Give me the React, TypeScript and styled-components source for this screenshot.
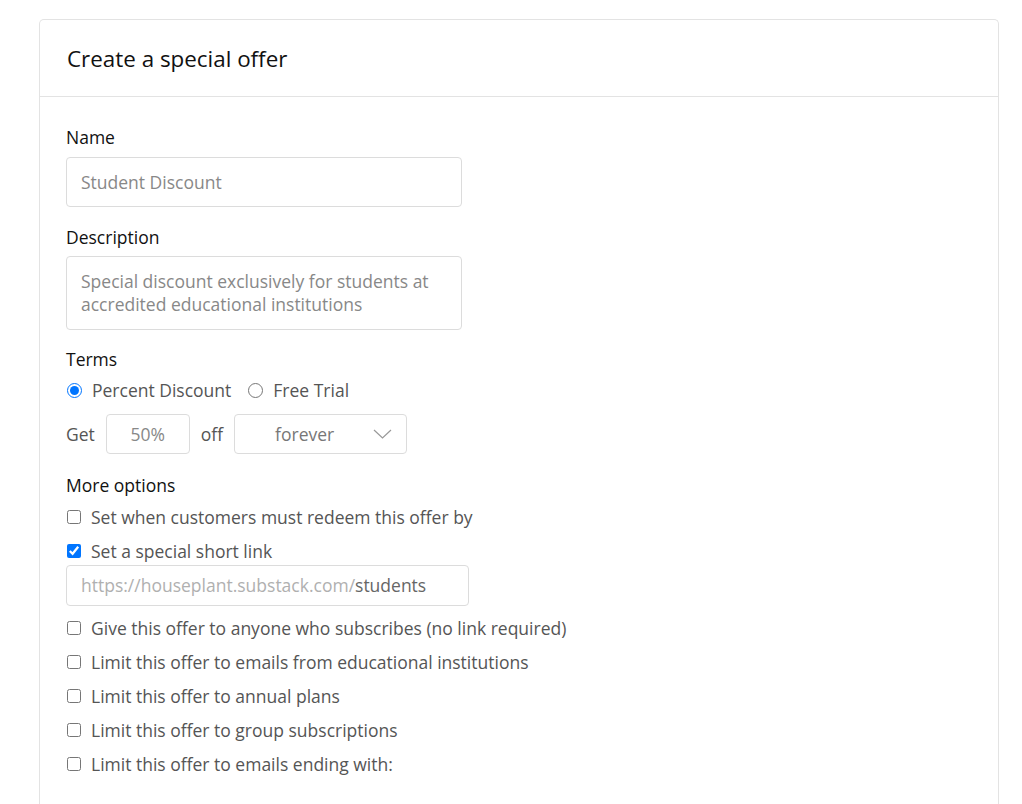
import React from 'react';
import styled, { createGlobalStyle } from 'styled-components';

const GlobalStyle = createGlobalStyle`
  body {
    margin: 0;
    background: #fff;
    font-family: 'Open Sans', 'Noto Sans', sans-serif;
  }
`;

const Page = styled.div`
  padding: 19px 23px 0 39px;
  height: 804px;
  overflow: hidden;
  box-sizing: border-box;
`;

const Card = styled.div`
  border: 1px solid #e3e3e3;
  border-bottom: none;
  border-radius: 5px 5px 0 0;
  min-height: 900px;
`;

const CardHeader = styled.div`
  height: 76px;
  display: flex;
  align-items: center;
  padding: 0 27px;
  border-bottom: 1px solid #e3e3e3;
`;

const Title = styled.h1`
  margin: 0;
  font-size: 22.4px;
  font-weight: 400;
  color: #111;
`;

const CardBody = styled.div`
  padding: 28px 26px;
  display: flex;
  flex-direction: column;
  font-size: 17.5px;
`;

const Label = styled.div<{ $gap?: number }>`
  line-height: 24px;
  color: #111;
  margin-bottom: ${p => p.$gap ?? 8}px;
`;

const TextBox = styled.div<{ $w: number; $h: number; $mb?: number }>`
  width: ${p => p.$w}px;
  min-height: ${p => p.$h}px;
  box-sizing: border-box;
  border: 1px solid #dcdcdc;
  border-radius: 4px;
  padding: 0 14px;
  display: flex;
  align-items: center;
  line-height: 23px;
  color: #888;
  margin-bottom: ${p => p.$mb ?? 0}px;
`;

const RadioRow = styled.div`
  display: flex;
  align-items: center;
  gap: 16px;
  line-height: 24px;
  color: #555;
  margin-bottom: 12px;
`;

const Choice = styled.label`
  display: flex;
  align-items: center;
  gap: 10px;
  input {
    margin: 0 0 0 1px;
    width: 15px;
    height: 15px;
    accent-color: #0075ff;
  }
`;

const TermsRow = styled.div`
  display: flex;
  align-items: center;
  height: 40px;
  color: #555;
  margin-bottom: 19px;
`;

const SmallBox = styled.div<{ $w: number }>`
  width: ${p => p.$w}px;
  height: 40px;
  box-sizing: border-box;
  border: 1px solid #dcdcdc;
  border-radius: 4px;
  display: flex;
  align-items: center;
  color: #888;
`;

const PercentBox = styled(SmallBox)`
  justify-content: center;
  margin: 0 11px;
`;

const SelectBox = styled(SmallBox)`
  justify-content: space-between;
  padding: 0 14px 0 40px;
  margin-left: 11px;
  color: #777;
`;

const CheckRow = styled.label<{ $mb?: number }>`
  display: flex;
  align-items: center;
  gap: 10px;
  line-height: 24px;
  color: #555;
  margin-bottom: ${p => p.$mb ?? 10}px;
  input {
    margin: 0 0 0 1px;
    width: 14px;
    height: 14px;
    accent-color: #0075ff;
  }
`;

const LinkBox = styled(TextBox)`
  color: #b0b0b0;
  span {
    color: #666;
  }
`;

const options = [
  'Give this offer to anyone who subscribes (no link required)',
  'Limit this offer to emails from educational institutions',
  'Limit this offer to annual plans',
  'Limit this offer to group subscriptions',
  'Limit this offer to emails ending with:',
];

const Chevron = () => (
  <svg width="19" height="10" viewBox="0 0 19 10" fill="none">
    <path d="M1 1 L9.5 9 L18 1" stroke="#999" strokeWidth="1.2" />
  </svg>
);

export default function App() {
  return (
    <>
      <GlobalStyle />
      <Page>
        <Card>
          <CardHeader>
            <Title>Create a special offer</Title>
          </CardHeader>
          <CardBody>
            <Label>Name</Label>
            <TextBox $w={396} $h={50} $mb={18}>Student Discount</TextBox>

            <Label $gap={7}>Description</Label>
            <TextBox $w={396} $h={74} $mb={17}>
              Special discount exclusively for students at accredited educational institutions
            </TextBox>

            <Label $gap={7}>Terms</Label>
            <RadioRow>
              <Choice>
                <input type="radio" name="terms" defaultChecked />
                Percent Discount
              </Choice>
              <Choice>
                <input type="radio" name="terms" />
                Free Trial
              </Choice>
            </RadioRow>
            <TermsRow>
              Get
              <PercentBox $w={84}>50%</PercentBox>
              off
              <SelectBox $w={173}>
                forever
                <Chevron />
              </SelectBox>
            </TermsRow>

            <Label>More options</Label>
            <CheckRow>
              <input type="checkbox" />
              Set when customers must redeem this offer by
            </CheckRow>
            <CheckRow $mb={2}>
              <input type="checkbox" defaultChecked />
              Set a special short link
            </CheckRow>
            <LinkBox $w={403} $h={41} $mb={10}>
              https://houseplant.substack.com/<span>students</span>
            </LinkBox>
            {options.map(o => (
              <CheckRow key={o}>
                <input type="checkbox" />
                {o}
              </CheckRow>
            ))}
          </CardBody>
        </Card>
      </Page>
    </>
  );
}
